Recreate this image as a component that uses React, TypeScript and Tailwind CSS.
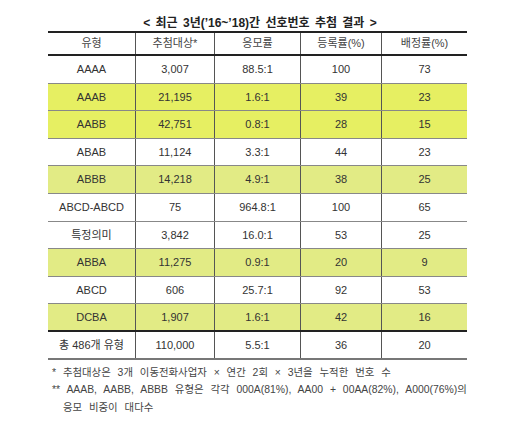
const rows: { type: string; target: string; rate: string; reg: string; alloc: string; hl?: "a" | "b" }[] = [
  { type: "AAAA", target: "3,007", rate: "88.5:1", reg: "100", alloc: "73" },
  { type: "AAAB", target: "21,195", rate: "1.6:1", reg: "39", alloc: "23", hl: "a" },
  { type: "AABB", target: "42,751", rate: "0.8:1", reg: "28", alloc: "15", hl: "a" },
  { type: "ABAB", target: "11,124", rate: "3.3:1", reg: "44", alloc: "23" },
  { type: "ABBB", target: "14,218", rate: "4.9:1", reg: "38", alloc: "25", hl: "b" },
  { type: "ABCD-ABCD", target: "75", rate: "964.8:1", reg: "100", alloc: "65" },
  { type: "특정의미", target: "3,842", rate: "16.0:1", reg: "53", alloc: "25" },
  { type: "ABBA", target: "11,275", rate: "0.9:1", reg: "20", alloc: "9", hl: "b" },
  { type: "ABCD", target: "606", rate: "25.7:1", reg: "92", alloc: "53" },
  { type: "DCBA", target: "1,907", rate: "1.6:1", reg: "42", alloc: "16", hl: "b" },
];

const font = { fontFamily: '"Liberation Sans", "Noto Sans CJK KR", sans-serif' };

function Row({ cells, className }: { cells: string[]; className: string }) {
  return (
    <div className={`grid grid-cols-[88px_79px_86px_81px_85px] ${className}`}>
      {cells.map((c, i) => (
        <div
          key={i}
          className={`flex items-center justify-center ${i < 4 ? "border-r border-[#555]" : ""}`}
        >
          {c}
        </div>
      ))}
    </div>
  );
}

export default function App() {
  return (
    <div className="h-[421px] w-[520px] bg-white pt-[16px] text-[#333]" style={font}>
      <div className="text-center text-[12px] font-bold leading-[14px] text-[#222] [word-spacing:2px]">
        &lt; 최근 3년(’16~’18)간 선호번호 추첨 결과 &gt;
      </div>

      <div className="ml-[48px] mt-[1px] w-[419px] text-[11px]">
        <Row
          cells={["유형", "추첨대상*", "응모률", "등록률(%)", "배정률(%)"]}
          className="h-[25px] border-y-2 border-[#222] text-[#444]"
        />
        {rows.map((r) => (
          <Row
            key={r.type}
            cells={[r.type, r.target, r.rate, r.reg, r.alloc]}
            className={`h-[27.6px] border-b border-[#888] ${
              r.hl === "a" ? "bg-[#e6ef62]" : r.hl === "b" ? "bg-[#e2eb85]" : ""
            } ${r.type === "DCBA" ? "border-b-2 border-b-[#222]" : ""}`}
          />
        ))}
        <Row
          cells={["총 486개 유형", "110,000", "5.5:1", "36", "20"]}
          className="h-[28px] border-b-2 border-[#777]"
        />
      </div>

      <div className="mt-[4px] pl-[52px] text-[10.4px] leading-[17.5px] text-[#444] [word-spacing:4px]">
        <div>* 추첨대상은 3개 이동전화사업자 × 연간 2회 × 3년을 누적한 번호 수</div>
        <div>** AAAB, AABB, ABBB 유형은 각각 000A(81%), AA00 + 00AA(82%), A000(76%)의</div>
        <div className="pl-[11px]">응모 비중이 대다수</div>
      </div>
    </div>
  );
}
